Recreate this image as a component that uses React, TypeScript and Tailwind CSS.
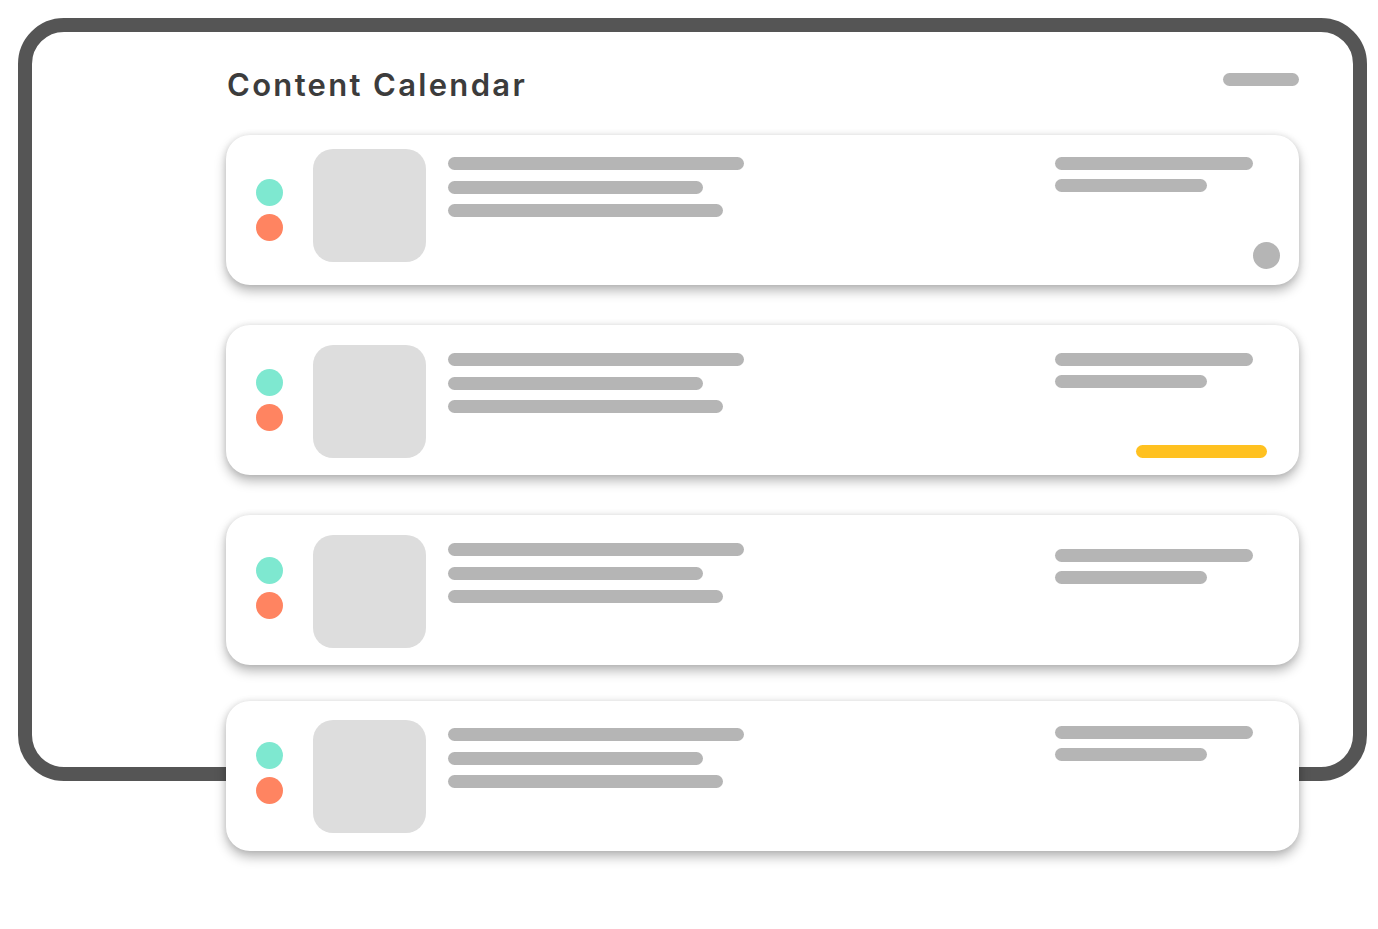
import React from "react";

type CardCfg = {
  mt: string;
  dots: string;
  thumb: string;
  left: string;
  right: string;
  extra?: "circle" | "bar";
};

const cards: CardCfg[] = [
  { mt: "mt-[35px]", dots: "pt-[44px]", thumb: "pt-[14px]", left: "pt-[22px]", right: "pt-[22px]", extra: "circle" },
  { mt: "mt-[40px]", dots: "pt-[44px]", thumb: "pt-[20px]", left: "pt-[28px]", right: "pt-[28px]", extra: "bar" },
  { mt: "mt-[40px]", dots: "pt-[42px]", thumb: "pt-[20px]", left: "pt-[28px]", right: "pt-[34px]" },
  { mt: "mt-[36px]", dots: "pt-[41px]", thumb: "pt-[19px]", left: "pt-[27px]", right: "pt-[25px]" },
];

function Card({ c }: { c: CardCfg }) {
  return (
    <div
      className={`${c.mt} flex items-start h-[150px] rounded-[24px] bg-white pl-[30px] pr-[19px] shadow-[0_6px_12px_rgba(0,0,0,0.28),0_0_6px_rgba(0,0,0,0.1)]`}
    >
      <div className={`${c.dots} flex flex-col gap-[8px]`}>
        <div className="w-[27px] h-[27px] rounded-full bg-[#7ee8d0]" />
        <div className="w-[27px] h-[27px] rounded-full bg-[#ff8461]" />
      </div>
      <div className={`${c.thumb} ml-[30px]`}>
        <div className="w-[113px] h-[113px] rounded-[20px] bg-[#dddddd]" />
      </div>
      <div className={`${c.left} ml-[22px] flex flex-col`}>
        <div className="w-[296px] h-[13px] rounded-full bg-[#b5b5b5]" />
        <div className="mt-[11px] w-[255px] h-[13px] rounded-full bg-[#b5b5b5]" />
        <div className="mt-[10px] w-[275px] h-[13px] rounded-full bg-[#b5b5b5]" />
      </div>
      <div className="flex-1" />
      <div className={`${c.right} w-[225px] flex flex-col`}>
        <div className="w-[198px] h-[13px] rounded-full bg-[#b5b5b5]" />
        <div className="mt-[9px] w-[152px] h-[13px] rounded-full bg-[#b5b5b5]" />
        {c.extra === "circle" && (
          <div className="mt-[50px] self-end w-[27px] h-[27px] rounded-full bg-[#b5b5b5]" />
        )}
        {c.extra === "bar" && (
          <div className="mt-[57px] self-end mr-[13px] w-[131px] h-[13px] rounded-full bg-[#ffc120]" />
        )}
      </div>
    </div>
  );
}

export default function App() {
  return (
    <div className="w-full h-[929px] bg-white overflow-hidden pt-[18px] font-['Inter',sans-serif]">
      <div className="ml-[18px] w-[1349px] h-[763px] rounded-[46px] border-[14px] border-[#555555] pl-[194px] pr-[54px] pt-[37px]">
        <div className="flex justify-between items-start h-[31px]">
          <h1 className="text-[31px] leading-[31px] font-semibold tracking-[0.075em] text-[#3c3c3c] ml-[1px]">
            Content Calendar
          </h1>
          <div className="mt-[4px] w-[76px] h-[13px] rounded-full bg-[#b5b5b5]" />
        </div>
        {cards.map((c, i) => (
          <Card key={i} c={c} />
        ))}
      </div>
    </div>
  );
}
